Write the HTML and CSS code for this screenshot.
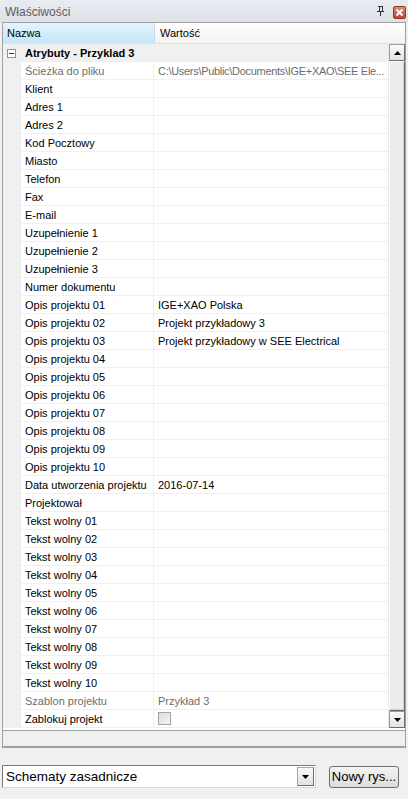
FILE: index.html
```html
<!DOCTYPE html>
<html>
<head>
<meta charset="utf-8">
<link rel="stylesheet" href="styles.css">
</head>
<body>
<div class="titlebar">
  <span class="title">Właściwości</span>
  <span class="tb-icons">
    <svg class="pin" width="9" height="11" viewBox="0 0 9 11"><path d="M2 1h5M3 1v5M6 1v5M1 6h7M4.5 6v5" stroke="#333" stroke-width="1" fill="none" shape-rendering="crispEdges"/></svg>
    <span class="close"><svg width="9" height="9" viewBox="0 0 9 9"><path d="M1.5 1.5l6 6M7.5 1.5l-6 6" stroke="#fff" stroke-width="1.8"/></svg></span>
  </span>
</div>
<div class="panel">
  <div class="header">
    <div class="hcell hname">Nazwa</div>
    <div class="hcell hvalue">Wartość</div>
  </div>
  <div class="body">
    <div class="grid">
      <div class="group">
        <span class="expander"><svg width="9" height="9" viewBox="0 0 9 9"><rect x="0.5" y="0.5" width="8" height="8" fill="#fff" stroke="#919191"/><path d="M2 4.5h5" stroke="#333"/></svg></span>
        <span class="gtitle">Atrybuty - Przyklad 3</span>
      </div>
      <div class="row ro"><div class="n">Ścieżka do pliku</div><div class="v path">C:\Users\Public\Documents\IGE+XAO\SEE Ele...</div></div>
      <div class="row"><div class="n">Klient</div><div class="v"></div></div>
      <div class="row"><div class="n">Adres 1</div><div class="v"></div></div>
      <div class="row"><div class="n">Adres 2</div><div class="v"></div></div>
      <div class="row"><div class="n">Kod Pocztowy</div><div class="v"></div></div>
      <div class="row"><div class="n">Miasto</div><div class="v"></div></div>
      <div class="row"><div class="n">Telefon</div><div class="v"></div></div>
      <div class="row"><div class="n">Fax</div><div class="v"></div></div>
      <div class="row"><div class="n">E-mail</div><div class="v"></div></div>
      <div class="row"><div class="n">Uzupełnienie 1</div><div class="v"></div></div>
      <div class="row"><div class="n">Uzupełnienie 2</div><div class="v"></div></div>
      <div class="row"><div class="n">Uzupełnienie 3</div><div class="v"></div></div>
      <div class="row"><div class="n">Numer dokumentu</div><div class="v"></div></div>
      <div class="row"><div class="n">Opis projektu 01</div><div class="v">IGE+XAO Polska</div></div>
      <div class="row"><div class="n">Opis projektu 02</div><div class="v">Projekt przykładowy 3</div></div>
      <div class="row"><div class="n">Opis projektu 03</div><div class="v">Projekt przykładowy w SEE Electrical</div></div>
      <div class="row"><div class="n">Opis projektu 04</div><div class="v"></div></div>
      <div class="row"><div class="n">Opis projektu 05</div><div class="v"></div></div>
      <div class="row"><div class="n">Opis projektu 06</div><div class="v"></div></div>
      <div class="row"><div class="n">Opis projektu 07</div><div class="v"></div></div>
      <div class="row"><div class="n">Opis projektu 08</div><div class="v"></div></div>
      <div class="row"><div class="n">Opis projektu 09</div><div class="v"></div></div>
      <div class="row"><div class="n">Opis projektu 10</div><div class="v"></div></div>
      <div class="row"><div class="n">Data utworzenia projektu</div><div class="v">2016-07-14</div></div>
      <div class="row"><div class="n">Projektował</div><div class="v"></div></div>
      <div class="row"><div class="n">Tekst wolny 01</div><div class="v"></div></div>
      <div class="row"><div class="n">Tekst wolny 02</div><div class="v"></div></div>
      <div class="row"><div class="n">Tekst wolny 03</div><div class="v"></div></div>
      <div class="row"><div class="n">Tekst wolny 04</div><div class="v"></div></div>
      <div class="row"><div class="n">Tekst wolny 05</div><div class="v"></div></div>
      <div class="row"><div class="n">Tekst wolny 06</div><div class="v"></div></div>
      <div class="row"><div class="n">Tekst wolny 07</div><div class="v"></div></div>
      <div class="row"><div class="n">Tekst wolny 08</div><div class="v"></div></div>
      <div class="row"><div class="n">Tekst wolny 09</div><div class="v"></div></div>
      <div class="row"><div class="n">Tekst wolny 10</div><div class="v"></div></div>
      <div class="row ro"><div class="n">Szablon projektu</div><div class="v">Przykład 3</div></div>
      <div class="row"><div class="n">Zablokuj projekt</div><div class="v"><span class="check"></span></div></div>
    </div>
    <div class="scrollbar">
      <div class="sbtn"><svg width="7" height="4" viewBox="0 0 7 4"><path d="M3.5 0L7 4H0z" fill="#000"/></svg></div>
      <div class="thumb"></div>
      <div class="sbtn"><svg width="7" height="4" viewBox="0 0 7 4"><path d="M0 0h7L3.5 4z" fill="#000"/></svg></div>
    </div>
  </div>
  <div class="desc"></div>
</div>
<div class="bottom">
  <div class="combo">
    <span class="combo-text">Schematy zasadnicze</span>
    <span class="combo-btn"><svg width="7" height="4" viewBox="0 0 7 4"><path d="M0 0h7L3.5 4z" fill="#000"/></svg></span>
  </div>
  <div class="button">Nowy rys...</div>
</div>
</body>
</html>
```
FILE: styles.css
```css
* { box-sizing: border-box; }
html, body { margin: 0; padding: 0; }
body {
  width: 408px;
  height: 799px;
  background: #f0f0f0;
  font-family: "Liberation Sans", Arial, sans-serif;
  font-size: 11px;
  color: #000;
  overflow: hidden;
}
.titlebar {
  height: 22px;
  display: flex;
  align-items: center;
  justify-content: space-between;
  padding: 1px 2px 0 5px;
  background: linear-gradient(#e9ecf1, #dde1e8);
}
.title { font-size: 12px; color: #5e5e5e; }
.tb-icons { display: flex; align-items: center; gap: 8px; }
.pin { margin-top: -2px; }
.close {
  width: 13px; height: 13px;
  display: flex; align-items: center; justify-content: center;
  background: linear-gradient(#e08a75, #c2452a);
  border: 1px solid #8c3a2a;
  border-radius: 2px;
  margin-top: 1px;
}
.panel {
  margin: 0 2px;
  border: 1px solid #a0a0a0;
  background: #fff;
  display: flex;
  flex-direction: column;
}
.header {
  height: 21px;
  display: flex;
  border-bottom: 1px solid #e2e2e2;
}
.hcell { display: flex; align-items: center; }
.hname {
  width: 152px;
  padding-left: 4px;
  background: linear-gradient(#e3f4fc, #c4e7f8);
  border-right: 1px solid #c0dcea;
}
.hvalue {
  flex: 1;
  padding-left: 5px;
  background: linear-gradient(#ffffff, #f3f3f3);
}
.body { display: flex; }
.grid { flex: 1; min-width: 0; background: #f0f0f0; }
.group {
  height: 18px;
  display: flex;
  align-items: center;
  background: #f0f0f0;
  padding-left: 4px;
}
.expander { display: flex; width: 9px; height: 9px; margin-right: 9px; }
.gtitle { font-weight: bold; }
.row {
  height: 18px;
  display: flex;
  margin-left: 18px;
  background: #fff;
  border-bottom: 1px solid #f0f0f0;
}
.n {
  width: 133px;
  flex-shrink: 0;
  padding-left: 4px;
  border-right: 1px solid #f0f0f0;
  display: flex; align-items: center;
  white-space: nowrap; overflow: hidden;
}
.v {
  flex: 1;
  min-width: 0;
  padding-left: 4px;
  display: flex; align-items: center;
  white-space: nowrap; overflow: hidden;
}
.path { letter-spacing: -0.3px; }
.ro .n, .ro .v { color: #6d6d6d; }
.check {
  width: 13px; height: 13px;
  border: 1px solid #a4a4a4;
  background: linear-gradient(135deg, #dcdcdc, #f4f4f4);
}
.scrollbar {
  width: 17px;
  flex-shrink: 0;
  display: flex;
  flex-direction: column;
  background: #f3f3f3;
  border-left: 1px solid #e6e6e6;
}
.sbtn {
  height: 17px;
  flex-shrink: 0;
  display: flex; align-items: center; justify-content: center;
  background: linear-gradient(#fbfbfb, #e3e3e3);
  border: 1px solid #9d9d9d;
  border-right-color: #6e6e6e;
  border-bottom-color: #6e6e6e;
}
.thumb {
  flex: 1;
  background: #ececec;
  border: 1px solid #fbfbfb;
  border-right-color: #6e6e6e;
  border-bottom-color: #6e6e6e;
  box-shadow: inset -1px -1px 0 #d0d0d0;
}
.desc {
  height: 17px;
  margin-top: 2px;
  background: #f0f0f0;
  border-top: 1px solid #a0a0a0;
  border-bottom: 1px solid #a0a0a0;
}
.bottom {
  display: flex;
  align-items: center;
  padding: 17px 0 0 2px;
  gap: 13px;
}
.combo {
  width: 314px;
  height: 23px;
  display: flex;
  align-items: center;
  justify-content: space-between;
  background: #fff;
  border: 1px solid #7a7a7a;
  border-right-color: #d8d8d8;
  border-bottom-color: #d8d8d8;
  padding: 0 1px 0 3px;
  font-size: 13.5px;
}
.combo-btn {
  width: 17px; height: 19px;
  display: flex; align-items: center; justify-content: center;
  background: linear-gradient(#f8f8f8, #e2e2e2);
  border: 1px solid #a8a8a8;
  border-right-color: #6e6e6e;
  border-bottom-color: #6e6e6e;
}
.button {
  width: 70px;
  height: 22px;
  display: flex; align-items: center; justify-content: center;
  white-space: nowrap;
  font-size: 13px;
  background: linear-gradient(#f4f4f4, #dcdcdc);
  border: 1px solid #707070;
  border-radius: 3px;
}
```
